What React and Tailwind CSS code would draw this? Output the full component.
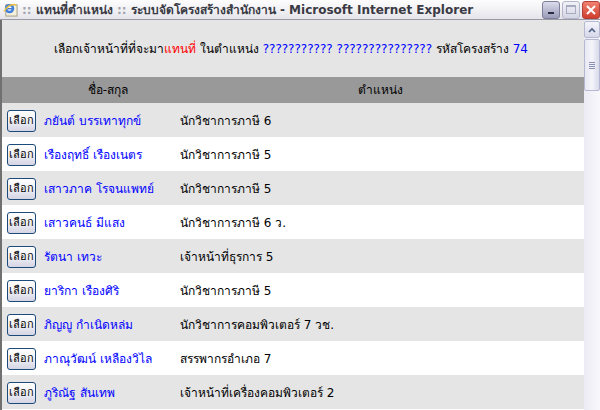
import React from 'react'

const rows = [
  { name: 'ภยันต์ บรรเทาทุกข์', pos: 'นักวิชาการภาษี 6' },
  { name: 'เรืองฤทธิ์ เรืองเนตร', pos: 'นักวิชาการภาษี 5' },
  { name: 'เสาวภาค โรจนแพทย์', pos: 'นักวิชาการภาษี 5' },
  { name: 'เสาวคนธ์ มีแสง', pos: 'นักวิชาการภาษี 6 ว.' },
  { name: 'รัตนา เทวะ', pos: 'เจ้าหน้าที่ธุรการ 5' },
  { name: 'ยาริกา เรืองศิริ', pos: 'นักวิชาการภาษี 5' },
  { name: 'ภิญญู กำเนิดหล่ม', pos: 'นักวิชาการคอมพิวเตอร์ 7 วช.' },
  { name: 'ภาณุวัฒน์ เหลืองวิไล', pos: 'สรรพากรอำเภอ 7' },
  { name: 'ภูริณัฐ สันเทพ', pos: 'เจ้าหน้าที่เครื่องคอมพิวเตอร์ 2' },
]

function TitleBar() {
  return (
    <div className="h-[20px] flex items-center bg-gradient-to-b from-[#fdfdfe] via-[#f2f2f5] to-[#e4e4ea] border-b border-[#9a9aa4]">
      <div className="w-[18px] h-[18px] ml-[1px] flex items-center justify-center">
        <svg width="15" height="15" viewBox="0 0 16 16">
          <rect x="3" y="3" width="12" height="12" fill="#f4f0dc" stroke="#a09a80" />
          <circle cx="7" cy="7" r="5" fill="#3f7fdc" />
          <circle cx="7" cy="7" r="2.4" fill="#ffffff" />
          <rect x="4.6" y="6.6" width="5" height="1.2" fill="#1f5fbf" />
          <path d="M1 10 Q7 1 14 3" stroke="#f2c33a" strokeWidth="1.4" fill="none" />
        </svg>
      </div>
      <div className="ml-[3px] flex-1 text-[12px] font-bold text-[#3a3a44] whitespace-nowrap overflow-hidden">
        <span className="text-[#a4a4ae]">::</span> แทนที่ตำแหน่ง <span className="text-[#a4a4ae]">::</span> ระบบจัดโครงสร้างสำนักงาน - Microsoft Internet Explorer
      </div>
      <div className="flex gap-[2px] items-center">
        <div className="w-[18px] h-[18px] rounded-[3px] border border-[#7c7e9a] bg-gradient-to-b from-[#dcdcec] to-[#9a9cb8] flex items-end justify-center pb-[4px]">
          <div className="w-[6px] h-[2px] bg-[#2a2a44]" />
        </div>
        <div className="w-[18px] h-[18px] rounded-[3px] border border-[#b4b6cc] bg-gradient-to-b from-[#f2f2f8] to-[#d4d6e4] flex items-center justify-center">
          <div className="w-[10px] h-[9px] border border-[#a8aac0] border-t-2" />
        </div>
        <div className="w-[18px] h-[18px] rounded-[3px] border border-[#b0403a] bg-gradient-to-b from-[#f08070] to-[#d03c2c] flex items-center justify-center">
          <svg width="12" height="12" viewBox="0 0 12 12">
            <path d="M2 2 L10 10 M10 2 L2 10" stroke="#fff" strokeWidth="2" />
          </svg>
        </div>
      </div>
    </div>
  )
}

function Scrollbar() {
  return (
    <div className="w-[16px] flex flex-col bg-gradient-to-r from-[#ecebf4] to-[#f8f8fc]">
      <div className="h-[17px] mt-[1px] rounded-[2px] border border-[#b4b8d0] bg-gradient-to-b from-[#f4f4fa] to-[#d6d8ea] flex items-center justify-center">
        <svg width="8" height="6" viewBox="0 0 8 6">
          <path d="M1 5 L4 2 L7 5" stroke="#4d6185" strokeWidth="1.6" fill="none" />
        </svg>
      </div>
      <div className="h-[52px] mt-[1px] rounded-[2px] border border-[#b4b8d0] bg-gradient-to-r from-[#e8e8f4] via-[#f4f4fa] to-[#d8daea] flex flex-col items-center justify-center gap-[1px]">
        <div className="w-[6px] h-[1px] bg-[#8c90b0]" />
        <div className="w-[6px] h-[1px] bg-[#8c90b0]" />
        <div className="w-[6px] h-[1px] bg-[#8c90b0]" />
        <div className="w-[6px] h-[1px] bg-[#8c90b0]" />
      </div>
    </div>
  )
}

export default function App() {
  return (
    <div className="w-[600px] h-[410px] overflow-hidden flex flex-col bg-white" style={{ fontFamily: 'Tahoma, "DejaVu Sans", sans-serif' }}>
      <TitleBar />
      <div className="flex flex-1 min-h-0 border-l-2 border-[#707070]">
        <div className="flex-1 overflow-hidden">
          <div className="h-[57px] bg-[#e5e5e5] flex items-center justify-center pr-[4px] text-[12px] text-black whitespace-nowrap">
            เลือกเจ้าหน้าที่ที่จะมา<span className="text-[#ff0000]">แทนที่</span>&nbsp;ในตำแหน่ง&nbsp;<span className="text-[#0000ff]">??????????? ???????????????</span>&nbsp;รหัสโครงสร้าง&nbsp;<span className="text-[#0000ff]">74</span>
          </div>
          <table className="w-full border-collapse text-[12px]">
            <thead>
              <tr className="h-[26px] bg-[#999999] text-black">
                <th className="w-[38px] font-normal" />
                <th className="w-[136px] font-normal text-center">ชื่อ-สกุล</th>
                <th className="font-normal text-center">ตำแหน่ง</th>
              </tr>
            </thead>
            <tbody>
              {rows.map((r, i) => (
                <tr key={i} className={`h-[34px] ${i % 2 === 0 ? 'bg-[#e5e5e5]' : 'bg-white'}`}>
                  <td className="pl-[5px] pt-[1px]">
                    <button className="w-[29px] h-[22px] px-0 rounded-[3px] border border-[#1c4a7a] bg-gradient-to-b from-white via-[#f0f0f6] to-[#d4d4e4] text-[11px] text-black leading-none">
                      เลือก
                    </button>
                  </td>
                  <td className="pl-[4px] pt-[1px] text-[#0000ff] whitespace-nowrap">{r.name}</td>
                  <td className="pl-[4px] pt-[1px] text-black whitespace-nowrap">{r.pos}</td>
                </tr>
              ))}
            </tbody>
          </table>
        </div>
        <Scrollbar />
      </div>
    </div>
  )
}
